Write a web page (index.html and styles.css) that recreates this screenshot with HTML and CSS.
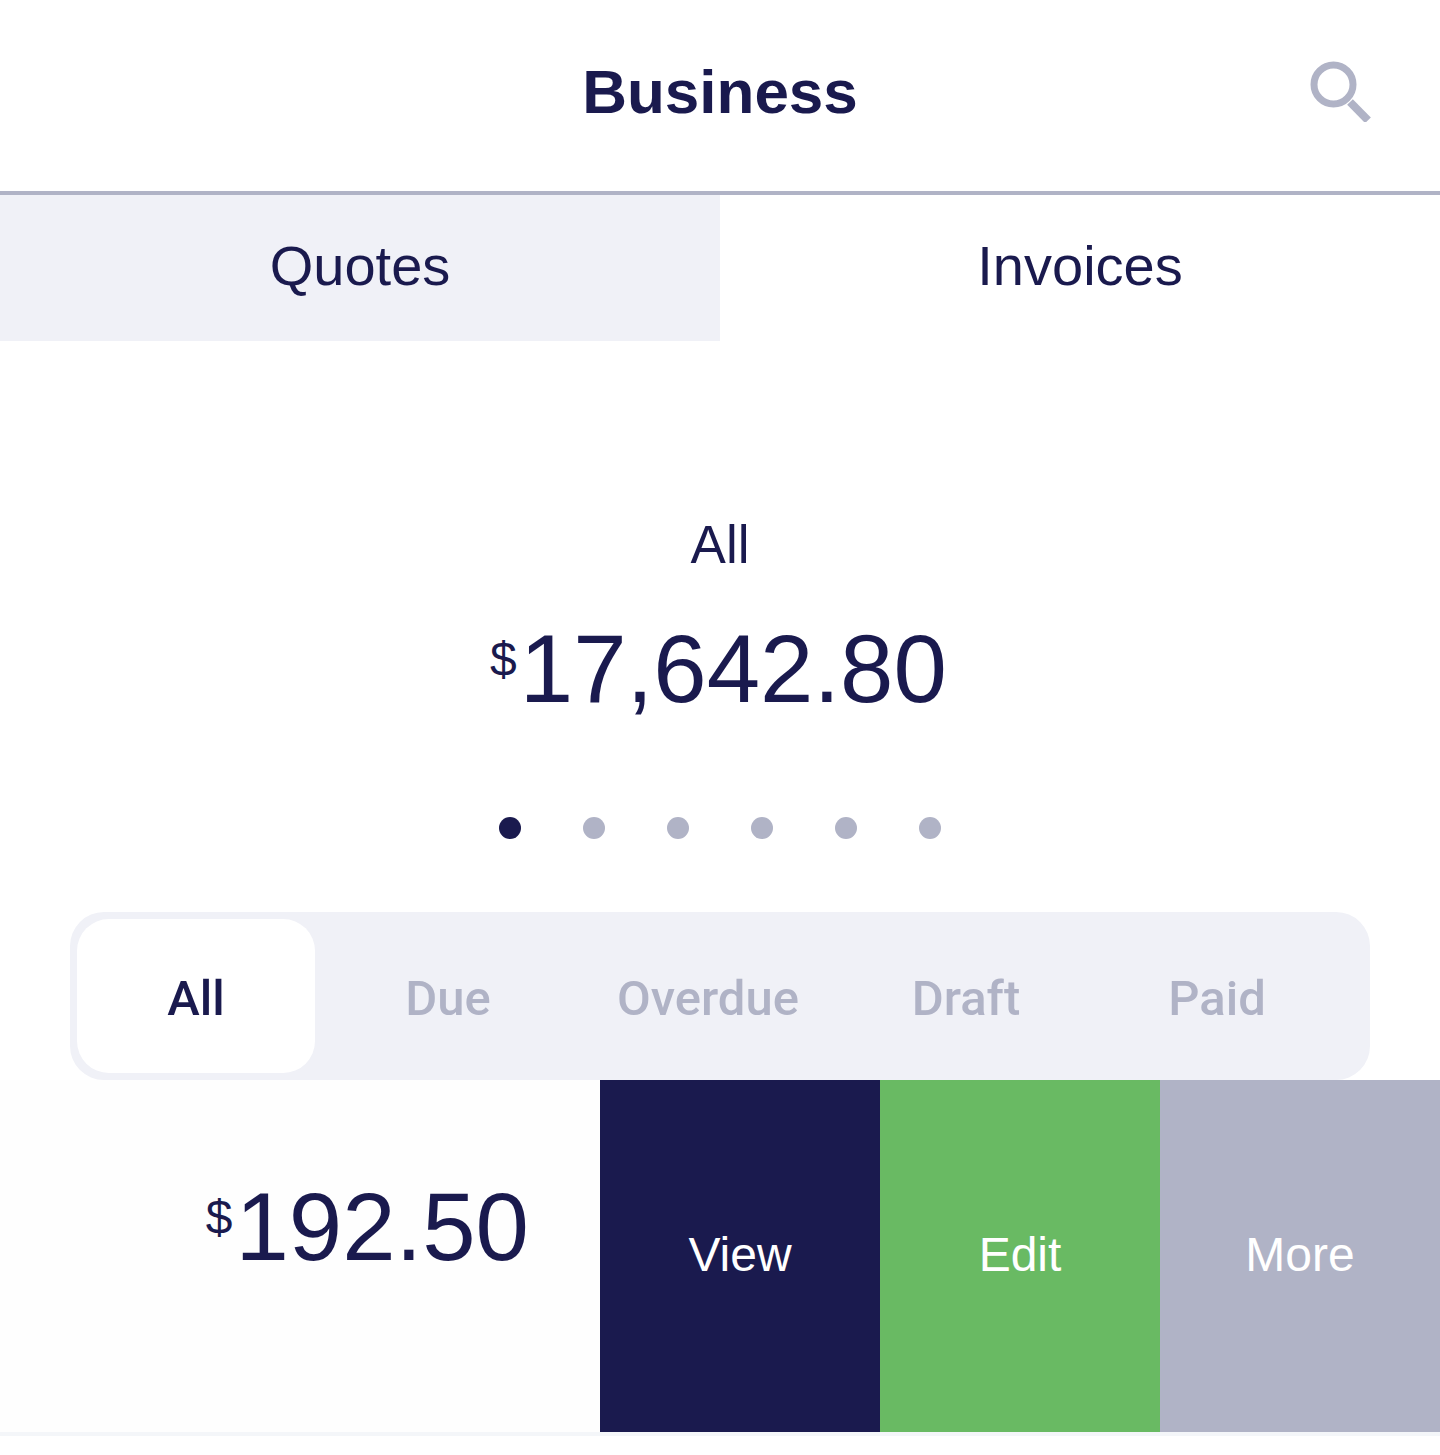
FILE: index.html
```html
<!DOCTYPE html>
<html lang="en">
<head>
  <meta charset="UTF-8" />
  <meta name="viewport" content="width=device-width, initial-scale=1.0" />
  <title>Business</title>
  <link rel="stylesheet" href="styles.css">
</head>
<body>
  <header class="topbar">
    <h1>Business</h1>
    <svg class="search-icon" width="62" height="62" viewBox="0 0 62 62" fill="none" stroke="#b0b3c6">
      <circle cx="24.5" cy="24.5" r="19.5" stroke-width="7"/>
      <path d="M41 42 L59 60.3" stroke-width="8"/>
    </svg>
  </header>

  <nav class="tabs">
    <div class="tab tab-active">Quotes</div>
    <div class="tab">Invoices</div>
  </nav>

  <section class="summary">
    <div class="summary-label">All</div>
    <div class="amount"><span class="currency">$</span>17,642.80</div>
    <div class="dots">
      <span class="dot dot-active"></span>
      <span class="dot"></span>
      <span class="dot"></span>
      <span class="dot"></span>
      <span class="dot"></span>
      <span class="dot"></span>
    </div>
  </section>

  <div class="filters">
    <div class="filter filter-active">All</div>
    <div class="filter">Due</div>
    <div class="filter">Overdue</div>
    <div class="filter">Draft</div>
    <div class="filter">Paid</div>
  </div>

  <div class="row">
    <div class="row-main">
      <div class="amount"><span class="currency">$</span>192.50</div>
    </div>
    <div class="action action-view">View</div>
    <div class="action action-edit">Edit</div>
    <div class="action action-more">More</div>
  </div>
</body>
</html>
```

FILE: styles.css
```css
body {
  margin: 0;
  background: #fff;
  color: #1a1a4e;
  font-family: 'Liberation Sans', Arial, sans-serif;
  min-height: 1455px;
}

.topbar {
  position: relative;
  box-sizing: content-box;
  height: 183px;
  padding-bottom: 8px;
  border-bottom: 4px solid #b0b3c6;
  display: flex;
  align-items: center;
  justify-content: center;
}

.topbar h1 {
  margin: 0;
  font-size: 62px;
  font-weight: 700;
  line-height: 1;
}

.search-icon {
  position: absolute;
  top: 60px;
  right: 69px;
}

.tabs {
  display: flex;
  height: 146px;
}

.tab {
  flex: 1;
  display: flex;
  align-items: center;
  justify-content: center;
  box-sizing: border-box;
  padding-bottom: 6px;
  font-size: 56px;
}

.tab-active {
  background: #f0f1f7;
}

.summary {
  display: flex;
  flex-direction: column;
  align-items: center;
  height: 571px;
}

.summary-label {
  margin-top: 174px;
  font-size: 53px;
  line-height: 60px;
}

.amount {
  font-size: 96px;
  line-height: 110px;
  white-space: nowrap;
}

.summary .amount {
  margin: 39px 3px 0 0;
}

.currency {
  margin-right: 3px;
  font-size: 48px;
  vertical-align: 26px;
  line-height: 0;
}

.dots {
  display: flex;
  gap: 62px;
  margin-top: 93px;
}

.dot {
  width: 22px;
  height: 22px;
  border-radius: 50%;
  background: #b0b3c6;
}

.dot-active {
  background: #1a1a4e;
}

.filters {
  display: grid;
  grid-template-columns: 238px 266px 254px 262px 240px;
  box-sizing: border-box;
  height: 168px;
  margin: 0 70px;
  padding: 7px;
  background: #f0f1f7;
  border-radius: 34px;
}

.filter {
  display: flex;
  align-items: center;
  justify-content: center;
  padding-top: 4px;
  font-family: Roboto, sans-serif;
  font-size: 49px;
  font-weight: 500;
  color: #b0b3c6;
}

.filter-active {
  background: #fff;
  color: #1a1a4e;
  border-radius: 32px;
}

.row {
  display: flex;
  height: 352px;
  border-bottom: 4px solid #f4f6f9;
  background: #fefefe;
}

.row-main {
  width: 600px;
  box-sizing: border-box;
  padding: 92px 71px 0 0;
  display: flex;
  justify-content: flex-end;
}

.action {
  width: 280px;
  box-sizing: border-box;
  padding-bottom: 4px;
  display: flex;
  align-items: center;
  justify-content: center;
  font-size: 48px;
  color: #fff;
}

.action-view { background: #1a1a4e; }
.action-edit { background: #69ba63; }
.action-more { background: #b0b3c6; }
```
